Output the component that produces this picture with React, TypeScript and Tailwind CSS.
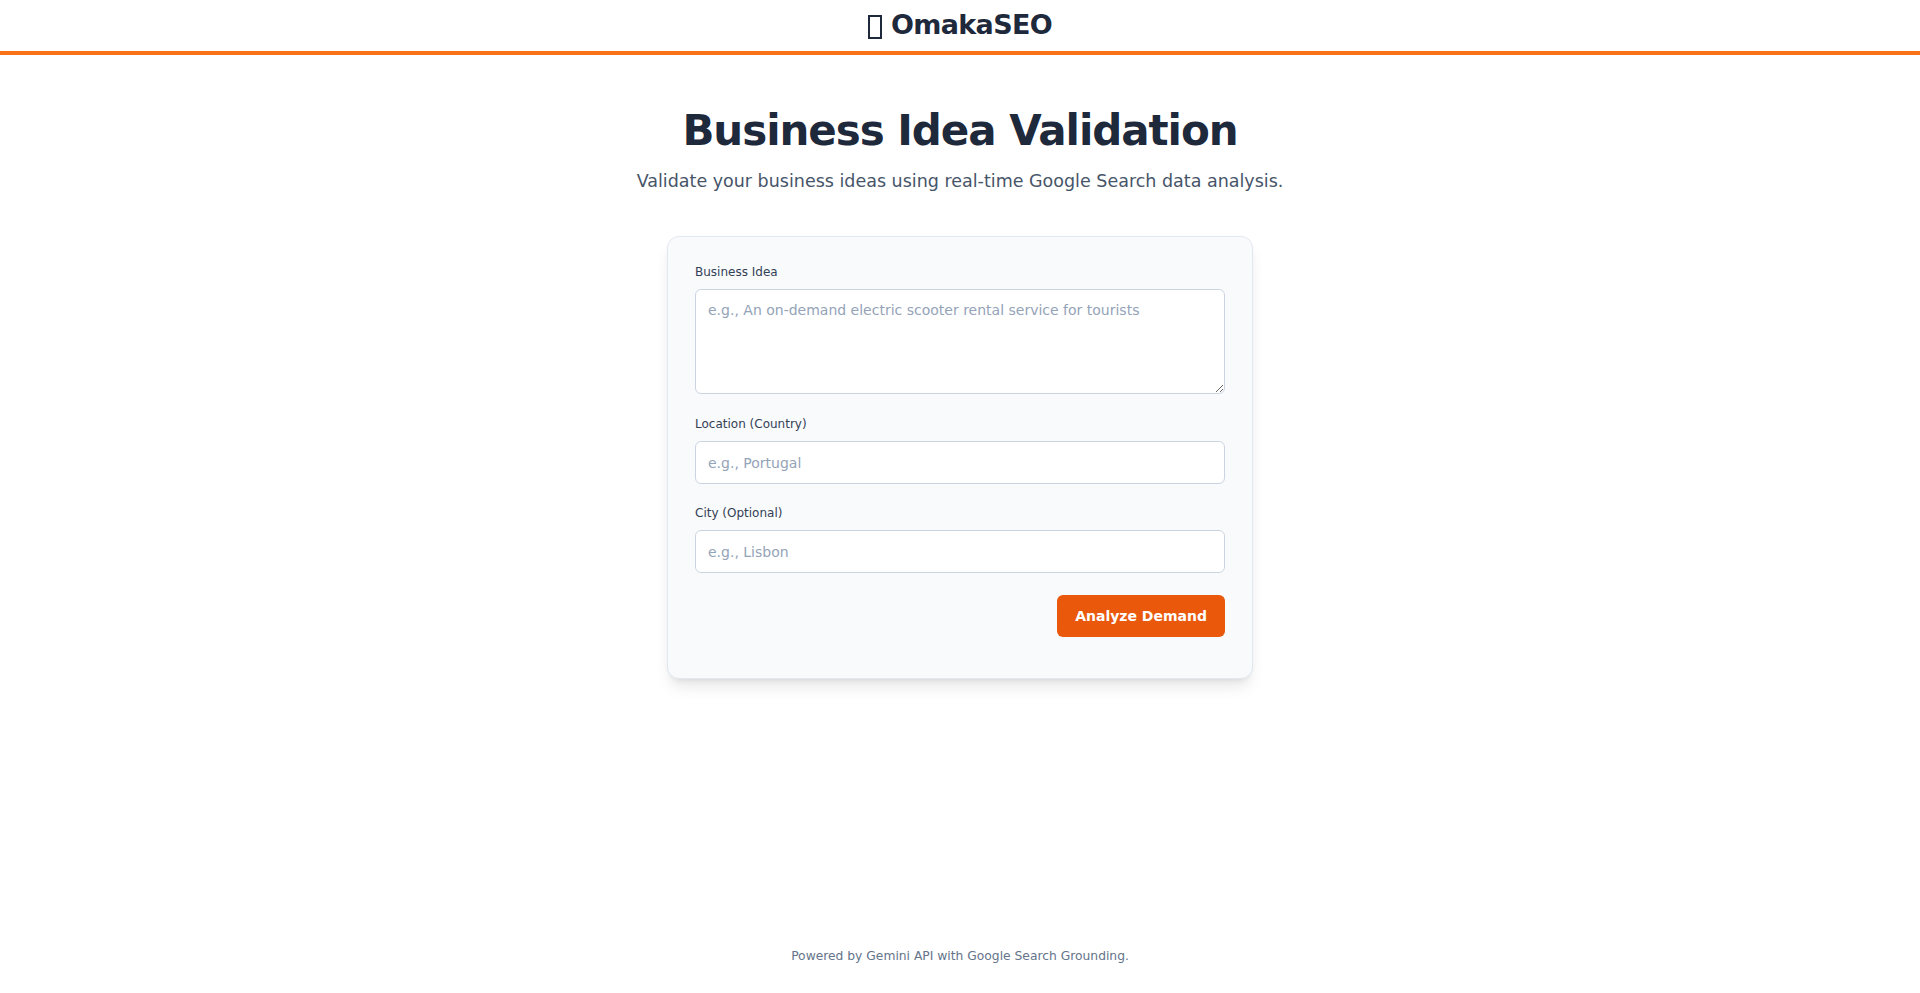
const fontStack = "font-['DejaVu_Sans',sans-serif]";

const Field = ({ label, placeholder }: { label: string; placeholder: string }) => {
  return (
    <div className="flex flex-col">
      <label className="text-xs leading-[18px] font-medium text-[#334155] mb-[8px]">{label}</label>
      <input
        type="text"
        placeholder={placeholder}
        className="h-[43px] w-full rounded-md border border-[#cbd5e1] bg-white px-3 text-sm text-[#1e293b] placeholder:text-[#94a3b8] outline-none"
      />
    </div>
  );
};

export default function App() {
  return (
    <div className={`min-h-screen flex flex-col bg-white ${fontStack}`}>
      {/* header */}
      <header className="h-[55px] border-b-4 border-[#f97316] flex items-center justify-center">
        <h1 className="flex items-center text-[27px] font-bold tracking-tight text-[#1e293b]">
          {/* missing-glyph box, as in the original */}
          <span aria-hidden className="inline-block w-[14px] h-[24px] border-2 border-[#1e293b] mr-[9px] translate-y-[1px]" />
          <span>OmakaSEO</span>
        </h1>
      </header>

      <main className="flex-1 flex flex-col items-center">
        <h2 className="mt-[50px] text-[42px] leading-[52px] font-bold tracking-tight text-[#1e293b]">
          Business Idea Validation
        </h2>
        <p className="mt-[10px] text-[17.5px] leading-7 text-[#475569]">
          Validate your business ideas using real-time Google Search data analysis.
        </p>

        <section className="mt-[41px] w-[586px] rounded-xl border border-[#e2e8f0] bg-[#f8fafc] px-[27px] pt-[26px] pb-[41px] shadow-lg">
          <div className="flex flex-col">
            <label className="text-xs leading-[18px] font-medium text-[#334155] mb-[8px]">Business Idea</label>
            <textarea
              placeholder="e.g., An on-demand electric scooter rental service for tourists"
              className="h-[105px] w-full rounded-md border border-[#cbd5e1] bg-white px-3 py-2.5 text-sm text-[#1e293b] placeholder:text-[#94a3b8] outline-none"
            />
          </div>
          <div className="mt-[21px]">
            <Field label="Location (Country)" placeholder="e.g., Portugal" />
          </div>
          <div className="mt-5">
            <Field label="City (Optional)" placeholder="e.g., Lisbon" />
          </div>
          <div className="mt-[22px] flex justify-end">
            <button className="h-[42px] rounded-md bg-[#ea580c] px-[18px] text-sm font-bold text-white">
              Analyze Demand
            </button>
          </div>
        </section>
      </main>

      <footer className="pb-[29px] text-center text-[12.3px] leading-4 text-[#64748b]">
        Powered by Gemini API with Google Search Grounding.
      </footer>
    </div>
  );
}
